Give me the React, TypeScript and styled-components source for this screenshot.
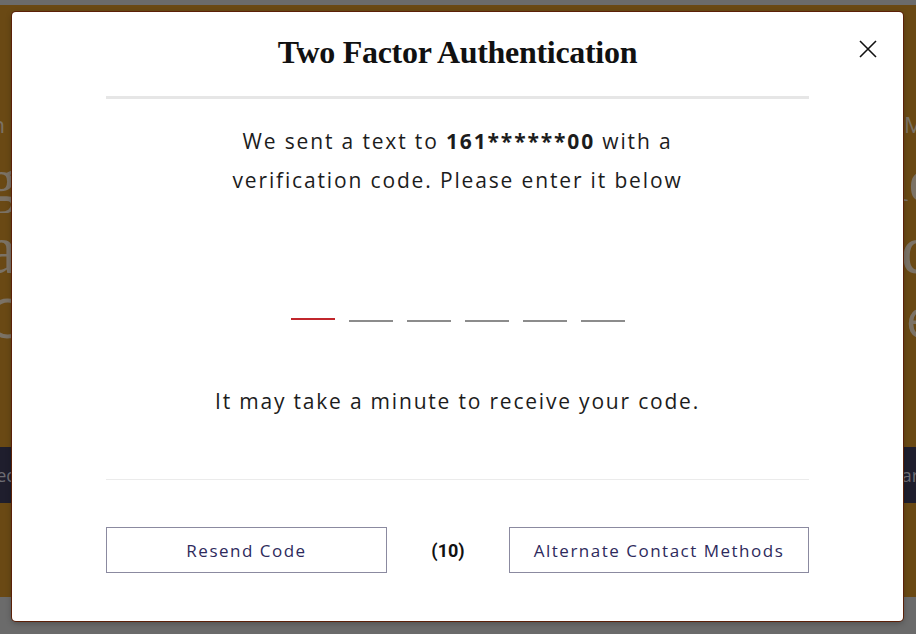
import React, { useState } from 'react'
import styled, { createGlobalStyle } from 'styled-components'

const GlobalStyle = createGlobalStyle`
	html, body {
		margin: 0;
		padding: 0;
		overflow: hidden;
	}
	body {
		font-family: 'Open Sans', 'Noto Sans', sans-serif;
	}
`

type SideTextT = {
	left: string
	right: string
	size: number
	serif?: boolean
	height: number
}

// page content that peeks out beside the dialog
const backdropLines: Array<SideTextT> = [
	{ left: 'in', right: 'Ma', size: 22, height: 46 },
	{ left: 'go', right: 'ne', size: 62, serif: true, height: 66 },
	{ left: 'al', right: 'nd', size: 70, serif: true, height: 74 },
	{ left: 'C', right: 'e', size: 54, height: 60 }
]

const CODE_LENGTH = 6

export default function App(): JSX.Element {
	const [active] = useState(0)
	const slots = Array.from({ length: CODE_LENGTH }, (_, i) => i)

	return (
		<>
			<GlobalStyle />
			<Page>
				<TopStrip />
				<Hero>
					{backdropLines.map((line, i) => (
						<BackdropLine key={i} $height={line.height}>
							<BackdropText $size={line.size} $serif={line.serif} $side="left">
								{line.left}
							</BackdropText>
							<BackdropText $size={line.size} $serif={line.serif} $side="right">
								{line.right}
							</BackdropText>
						</BackdropLine>
					))}
				</Hero>
				<NavBand>
					<NavText $side="left">Featured</NavText>
					<NavText $side="right">Year</NavText>
				</NavBand>
				<Lower />
				<Footer />
			</Page>

			<Overlay>
				<Modal>
					<Header>
						<Title>Two Factor Authentication</Title>
						<CloseButton aria-label="Close">
							<svg width="18" height="18" viewBox="0 0 18 18">
								<path d="M1 1 L17 17 M17 1 L1 17" stroke="#111" strokeWidth="1.6" />
							</svg>
						</CloseButton>
					</Header>

					<Message>
						We sent a text to <strong>161******00</strong> with a
						<br />
						verification code. Please enter it below
					</Message>

					<CodeRow>
						{slots.map((i) => (
							<CodeSlot key={i} $active={i === active} />
						))}
					</CodeRow>

					<Hint>It may take a minute to receive your code.</Hint>

					<Divider />

					<Actions>
						<OutlineButton $width={281}>Resend Code</OutlineButton>
						<Countdown>(10)</Countdown>
						<OutlineButton $width={300}>Alternate Contact Methods</OutlineButton>
					</Actions>
				</Modal>
			</Overlay>
		</>
	)
}

const Page = styled.div`
	display: flex;
	flex-direction: column;
	width: 916px;
	height: 634px;
	overflow: hidden;
	background: #6b6b6b;
`

const TopStrip = styled.div`
	height: 5px;
	background: #6b6b6b;
`

const Hero = styled.div`
	height: 442px;
	background: #6a4914;
	padding-top: 96px;
	box-sizing: border-box;
	display: flex;
	flex-direction: column;
`

const BackdropLine = styled.div<{ $height: number }>`
	display: flex;
	justify-content: space-between;
	align-items: center;
	height: ${(p) => p.$height}px;
	overflow: hidden;
`

const BackdropText = styled.span<{ $size: number; $serif?: boolean; $side: 'left' | 'right' }>`
	font-family: ${(p) => (p.$serif ? "'Liberation Serif', serif" : "'Open Sans', sans-serif")};
	font-size: ${(p) => p.$size}px;
	line-height: 1;
	color: #7b7265;
	${(p) => (p.$side === 'left' ? 'margin-left: -14px;' : 'margin-right: -20px;')}
`

const NavBand = styled.div`
	height: 56px;
	background: #1f1e2d;
	display: flex;
	justify-content: space-between;
	align-items: center;
	overflow: hidden;
`

const NavText = styled.span<{ $side: 'left' | 'right' }>`
	font-size: 18px;
	color: #6e6d74;
	${(p) => (p.$side === 'left' ? 'margin-left: -58px;' : 'margin-right: -3px;')}
`

const Lower = styled.div`
	height: 94px;
	background: #6a4914;
`

const Footer = styled.div`
	flex: 1;
	background: #6b6b6b;
`

const Overlay = styled.div`
	position: absolute;
	inset: 0;
	display: flex;
	align-items: flex-start;
	padding: 12px 0 0 12px;
`

const Modal = styled.div`
	width: 891px;
	height: 609px;
	box-sizing: border-box;
	background: #fff;
	border-radius: 4px;
	box-shadow: 0 0 0 1px #5b2008, 0 2px 6px rgba(0, 0, 0, 0.3);
	padding: 0 94px;
	display: flex;
	flex-direction: column;
	position: relative;
`

const Header = styled.div`
	height: 87px;
	box-sizing: border-box;
	padding-bottom: 4px;
	display: flex;
	align-items: center;
	justify-content: center;
	border-bottom: 3px solid #e6e6e6;
`

const Title = styled.h1`
	margin: 0;
	font-family: 'Liberation Serif', 'DejaVu Serif', serif;
	font-weight: 700;
	font-size: 32px;
	color: #111;
	letter-spacing: -0.3px;
`

const CloseButton = styled.button`
	position: absolute;
	top: 28px;
	right: 26px;
	width: 18px;
	height: 18px;
	padding: 0;
	border: 0;
	background: transparent;
	cursor: pointer;
	display: flex;
`

const Message = styled.p`
	margin: 23px 0 0;
	text-align: center;
	font-size: 21px;
	line-height: 39px;
	color: #1c1c1c;
	letter-spacing: 1.85px;

	strong {
		font-weight: 700;
	}
`

const CodeRow = styled.div`
	margin-top: 82px;
	height: 40px;
	display: flex;
	justify-content: center;
	align-items: flex-end;
	gap: 14px;
`

const CodeSlot = styled.div<{ $active: boolean }>`
	width: 44px;
	height: 38px;
	border-bottom: 2px solid ${(p) => (p.$active ? '#c1262c' : '#8c8c8c')};
	margin-bottom: ${(p) => (p.$active ? '2px' : '0')};
`

const Hint = styled.p`
	margin: 60px 0 0;
	text-align: center;
	font-size: 21px;
	line-height: 39px;
	color: #1c1c1c;
	letter-spacing: 1.8px;
`

const Divider = styled.div`
	margin-top: 58px;
	height: 1px;
	background: #ebebeb;
`

const Actions = styled.div`
	margin-top: 47px;
	display: flex;
	justify-content: space-between;
	align-items: center;
`

const OutlineButton = styled.button<{ $width: number }>`
	width: ${(p) => p.$width}px;
	height: 46px;
	box-sizing: border-box;
	border: 1px solid #8b8aa0;
	background: #fff;
	font-family: 'Open Sans', sans-serif;
	font-size: 17px;
	color: #2e2a5c;
	letter-spacing: 1.5px;
	cursor: pointer;
`

const Countdown = styled.span`
	font-family: 'Roboto', sans-serif;
	font-weight: 700;
	font-size: 18px;
	color: #111;
`
